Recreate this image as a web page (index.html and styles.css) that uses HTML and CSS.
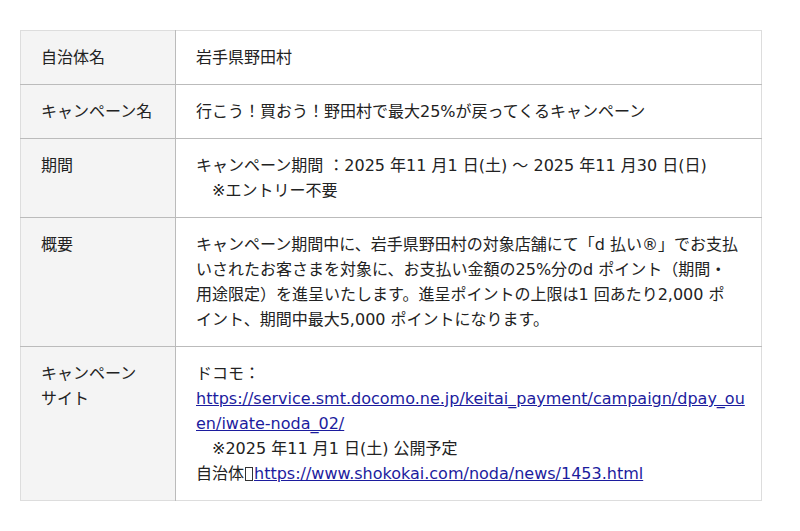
FILE: index.html
```html
<!DOCTYPE html>
<html lang="ja">
<head>
<meta charset="utf-8">
<title>キャンペーン</title>
<link rel="stylesheet" href="styles.css">
</head>
<body>
<table class="info">
  <tbody>
    <tr>
      <th>自治体名</th>
      <td>岩手県野田村</td>
    </tr>
    <tr>
      <th>キャンペーン名</th>
      <td>行こう！買おう！野田村で最大25%が戻ってくるキャンペーン</td>
    </tr>
    <tr>
      <th>期間</th>
      <td>キャンペーン期間 ：2025 年11 月1 日(土) 〜 2025 年11 月30 日(日)<br>　※エントリー不要</td>
    </tr>
    <tr>
      <th>概要</th>
      <td>キャンペーン期間中に、岩手県野田村の対象店舗にて「d 払い®」でお支払いされたお客さまを対象に、お支払い金額の25%分のd ポイント（期間・用途限定）を進呈いたします。進呈ポイントの上限は1 回あたり2,000 ポイント、期間中最大5,000 ポイントになります。</td>
    </tr>
    <tr>
      <th>キャンペーン<br>サイト</th>
      <td>ドコモ：<br><a href="#"><span class="nw">https://service.smt.docomo.ne.jp/keitai_payment/campaign/dpay_ou</span><wbr><span class="nw">en/iwate-noda_02/</span></a><br>　※2025 年11 月1 日(土) 公開予定<br>自治体<span class="tofu"></span><a href="#">https://www.shokokai.com/noda/news/1453.html</a></td>
    </tr>
  </tbody>
</table>
</body>
</html>
```
FILE: styles.css
```css
html, body {
  margin: 0;
  padding: 0;
  background: #ffffff;
}

body {
  padding: 30px 0 0 20px;
  font-family: "DejaVu Sans", "Noto Sans CJK JP", sans-serif;
  font-size: 16px;
  line-height: 25px;
  color: #222222;
}

.info {
  width: 742px;
  border-collapse: collapse;
  table-layout: fixed;
  border: 1px solid #dddddd;
}

.info th,
.info td {
  border-top: 1px solid #bbbbbb;
  padding: 14px 21px 14px 20px;
  vertical-align: top;
  text-align: left;
  font-weight: normal;
}

.info tr:first-child th,
.info tr:first-child td {
  border-top-color: #dddddd;
}

.info th {
  width: 124px;
  padding-right: 10px;
  background: #f4f4f4;
  border-right: 1px solid #bbbbbb;
}

.info a {
  color: #1c1c9e;
  text-decoration: underline;
}

.nw {
  white-space: nowrap;
}

.tofu {
  display: inline-block;
  width: 6px;
  height: 12px;
  border: 1px solid #333333;
  margin: 0 1px;
  vertical-align: -2px;
}
```
